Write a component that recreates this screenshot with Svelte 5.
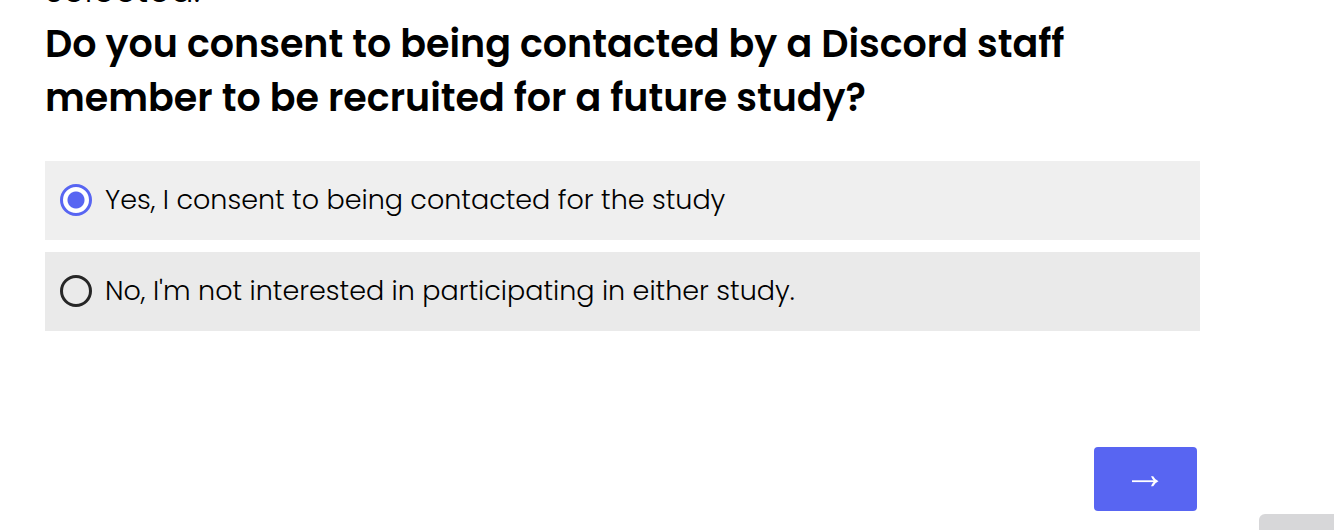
<script>
  const options = [
    { value: 'yes', label: 'Yes, I consent to being contacted for the study' },
    { value: 'no', label: "No, I'm not interested in participating in either study." }
  ];
  let selected = $state('yes');
</script>

<form class="survey" onsubmit={(event) => event.preventDefault()}>
  <fieldset>
    <legend>
      <span class="intro">selected.</span>
      <span class="question">Do you consent to being contacted by a Discord staff member to be recruited for a future study?</span>
    </legend>
    <div class="options">
      {#each options as option (option.value)}
        <label class="option" class:selected={selected === option.value}>
          <input type="radio" name="consent" value={option.value} bind:group={selected} />
          <span>{option.label}</span>
        </label>
      {/each}
    </div>
  </fieldset>
  <div class="actions">
    <button type="submit" aria-label="Next">
      <svg width="29" height="14" viewBox="0 0 29 14" fill="none" stroke="#fff" aria-hidden="true">
        <path d="M1 7.2H26" stroke-width="1.8" />
        <path d="M20 2.2L22.2 2.2Q23.8 5.5 27.5 7.2Q23.8 8.7 22.2 12.2L20 12.2Q21.2 9.4 23.2 7.2Q21.2 5 20 2.2Z" fill="#fff" stroke="none" />
      </svg>
    </button>
  </div>
</form>
<div class="drawer"></div>

<style>
  :global(body) {
    background: #fff;
    overflow-x: hidden;
  }

  .survey {
    margin-top: -37px;
    padding: 0 134px 19px 45px;
    color: #000;
    font-family: Poppins, Inter, sans-serif;
  }

  fieldset {
    min-width: 0;
    margin: 0;
    padding: 0;
    border: 0;
  }

  legend {
    padding: 0;
  }

  .intro,
  .question {
    display: block;
    line-height: 54px;
  }

  .intro {
    font-size: 35px;
    font-weight: 300;
  }

  .question {
    font-size: 38px;
    font-weight: 600;
  }

  .options {
    display: grid;
    gap: 12px;
    margin-top: 36px;
  }

  .option {
    display: flex;
    align-items: center;
    gap: 13px;
    padding: 18px 15px 20px;
    background: #eaeaea;
    font-size: 27px;
    font-weight: 300;
    line-height: 41px;
    cursor: pointer;
  }

  .option.selected {
    background: #efefef;
  }

  input {
    appearance: none;
    flex: none;
    box-sizing: border-box;
    width: 32px;
    height: 32px;
    margin: 0;
    border: 3px solid #262626;
    border-radius: 50%;
  }

  input:checked {
    border-color: #5865f2;
    background: radial-gradient(circle, #5865f2 8px, #fff 9px);
  }

  .actions {
    display: flex;
    justify-content: flex-end;
    margin-top: 116px;
    padding-right: 3px;
  }

  button {
    display: flex;
    align-items: center;
    justify-content: center;
    padding: 27px 37px 23px;
    border: 0;
    border-radius: 4px;
    background: #5865f2;
    cursor: pointer;
  }

  .drawer {
    position: fixed;
    right: 0;
    bottom: 0;
    width: 75px;
    height: 16px;
    border-top-left-radius: 6px;
    background: #d7d7d9;
  }
</style>
